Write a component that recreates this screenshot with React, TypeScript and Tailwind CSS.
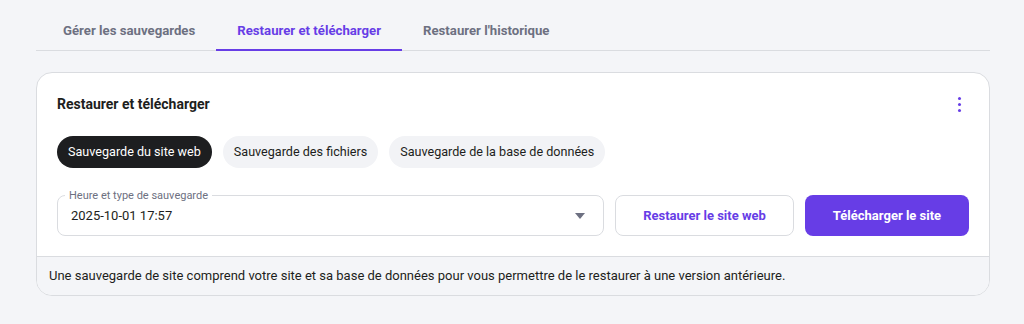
import { useState } from 'react'

const tabs = ['Gérer les sauvegardes', 'Restaurer et télécharger', "Restaurer l'historique"]
const types = ['Sauvegarde du site web', 'Sauvegarde des fichiers', 'Sauvegarde de la base de données']

export default function App() {
  const [tab, setTab] = useState(1)
  const [type, setType] = useState(0)

  return (
    <div className="min-h-[324px] bg-[#f4f5f8] pl-9 pr-[34px] text-[#1d1e20] font-['Roboto','Noto_Sans',sans-serif]">
      {/* Tabs */}
      <div className="flex border-b border-[#dadce0] pt-[12px] pl-[6px]">
        {tabs.map((t, i) => (
          <button
            key={t}
            onClick={() => setTab(i)}
            className={
              'h-[39px] px-[21px] text-[13.2px] font-bold border-b-2 -mb-px ' +
              (tab === i ? 'text-[#673de6] border-[#673de6]' : 'text-[#6d7081] border-transparent')
            }
          >
            {t}
          </button>
        ))}
      </div>

      {/* Card */}
      <div className="mt-[21px] rounded-2xl border border-[#dadce0] bg-white overflow-hidden">
        <div className="px-5 pt-[20px] pb-5">
          <div className="flex items-center justify-between">
            <h2 className="text-[14px] font-bold">Restaurer et télécharger</h2>
            <button className="flex flex-col gap-[3px] px-2 py-1">
              <span className="w-[3px] h-[3px] rounded-full bg-[#673de6]" />
              <span className="w-[3px] h-[3px] rounded-full bg-[#673de6]" />
              <span className="w-[3px] h-[3px] rounded-full bg-[#673de6]" />
            </button>
          </div>

          <div className="flex gap-[11px] mt-[20px]">
            {types.map((t, i) => (
              <button
                key={t}
                onClick={() => setType(i)}
                className={
                  'h-8 px-[11px] rounded-full text-[12.6px] ' +
                  (type === i ? 'bg-[#1d1e20] text-white' : 'bg-[#f2f3f6] text-[#1d1e20]')
                }
              >
                {t}
              </button>
            ))}
          </div>

          <div className="flex gap-[11px] mt-[27px]">
            <div className="relative flex-1 h-[41px] rounded-lg border border-[#dadce0] flex items-center justify-between pl-[13px] pr-[18px]">
              <span className="absolute -top-[8px] left-[7px] bg-white px-[4px] text-[11px] text-[#6d7081]">
                Heure et type de sauvegarde
              </span>
              <span className="text-[13px] mt-[1px]">2025-10-01 17:57</span>
              <svg width="10" height="6" viewBox="0 0 10 6">
                <path d="M0 0h10L5 6z" fill="#6d7081" />
              </svg>
            </div>
            <button className="w-[179px] h-[41px] rounded-lg border border-[#dadce0] text-[13px] font-bold text-[#673de6]">
              Restaurer le site web
            </button>
            <button className="w-[164px] h-[41px] rounded-lg bg-[#673de6] text-[13px] font-bold text-white">
              Télécharger le site
            </button>
          </div>
        </div>

        <div className="border-t border-[#dadce0] bg-[#f4f5f8] px-3 h-[39px] flex items-center text-[13px]">
          Une sauvegarde de site comprend votre site et sa base de données pour vous permettre de le restaurer à une version antérieure.
        </div>
      </div>
    </div>
  )
}
